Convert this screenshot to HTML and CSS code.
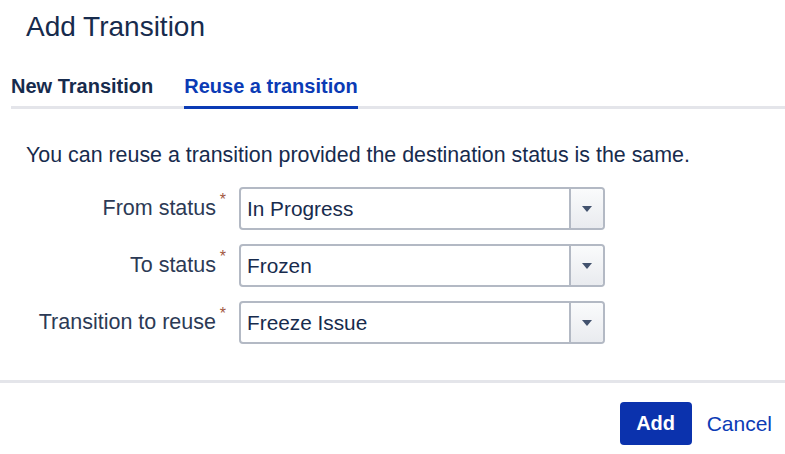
FILE: index.html
```html
<!DOCTYPE html>
<html>
<head>
<meta charset="utf-8">
<link rel="stylesheet" href="styles.css">
</head>
<body>
<div class="dialog">
  <h1 class="title">Add Transition</h1>
  <div class="tabs">
    <div class="tab">New Transition</div>
    <div class="tab active">Reuse a transition</div>
  </div>
  <p class="desc">You can reuse a transition provided the destination status is the same.</p>
  <div class="form">
    <div class="row">
      <div class="label">From status<span class="req">*</span></div>
      <div class="select"><span class="value">In Progress</span><span class="drop"><svg width="10" height="6" viewBox="0 0 10 6"><path d="M0 0H10L5 6Z" fill="#42526e"/></svg></span></div>
    </div>
    <div class="row">
      <div class="label">To status<span class="req">*</span></div>
      <div class="select"><span class="value">Frozen</span><span class="drop"><svg width="10" height="6" viewBox="0 0 10 6"><path d="M0 0H10L5 6Z" fill="#42526e"/></svg></span></div>
    </div>
    <div class="row">
      <div class="label">Transition to reuse<span class="req">*</span></div>
      <div class="select"><span class="value">Freeze Issue</span><span class="drop"><svg width="10" height="6" viewBox="0 0 10 6"><path d="M0 0H10L5 6Z" fill="#42526e"/></svg></span></div>
    </div>
  </div>
  <div class="footer">
    <button class="btn-add">Add</button>
    <a class="cancel">Cancel</a>
  </div>
</div>
</body>
</html>
```
FILE: styles.css
```css
* { box-sizing: border-box; }
html, body { margin: 0; padding: 0; background: #fff; }
body { font-family: "Liberation Sans", Arial, sans-serif; color: #172b4d; }
.dialog { width: 785px; height: 454px; overflow: hidden; }
.title { margin: 0; padding: 10px 0 0 26px; font-size: 28px; font-weight: 400; line-height: 34px; color: #172b4d; height: 68px; }
.tabs { display: flex; margin-left: 11px; border-bottom: 3px solid #e4e5ea; gap: 31px; }
.tab { font-size: 20px; font-weight: 600; line-height: 24px; padding: 6px 0 8px; margin-bottom: -3px; border-bottom: 3px solid transparent; color: #172b4d; }
.tab.active { color: #0b3bb5; border-bottom-color: #0b3bb5; }
.desc { margin: 33px 0 0 26px; font-size: 21.4px; line-height: 26px; }
.form { margin-top: 19px; display: flex; flex-direction: column; gap: 14px; }
.row { display: flex; align-items: center; }
.label { width: 239px; text-align: right; font-size: 21.5px; padding-right: 23px; color: #2c3a55; position: relative; }
.req { color: #a2593f; font-size: 16px; position: absolute; right: 13px; top: -5px; }
.select { width: 366px; height: 43px; border: 2px solid #b3b9c4; border-radius: 4px; display: flex; align-items: stretch; background: #fff; }
.value { flex: 1; font-size: 20.8px; padding-left: 6px; display: flex; align-items: center; color: #172b4d; }
.drop { width: 34px; border-left: 2px solid #b3b9c4; background: linear-gradient(#fafbfc, #e9ebef); display: flex; align-items: center; justify-content: center; border-radius: 0 3px 3px 0; }
.footer { margin-top: 36px; border-top: 3px solid #e4e5ea; display: flex; justify-content: flex-end; align-items: center; padding: 19px 13px 0 0; gap: 15px; }
.btn-add { width: 72px; height: 43px; background: #0b32ad; color: #fff; font-family: "Liberation Sans", Arial, sans-serif; font-weight: 700; font-size: 20px; border: none; border-radius: 4px; }
.cancel { color: #0b3bb5; font-size: 21px; }
```
